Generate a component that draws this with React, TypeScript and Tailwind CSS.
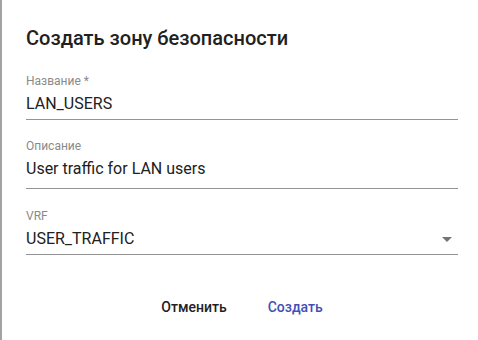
const fields = [
  { label: "Название *", value: "LAN_USERS", mt: "mt-[23px]", pb: "pb-[5px]" },
  { label: "Описание", value: "User traffic for LAN users", mt: "mt-[18px]", pb: "pb-[9px]" },
  { label: "VRF", value: "USER_TRAFFIC", mt: "mt-[19px]", pb: "pb-[5px]", select: true },
];

export default function App() {
  return (
    <div
      className="w-[478px] h-[340px] bg-white border-l-2 border-[#a3a3a3] pl-6 pr-5 pt-[26px] flex flex-col"
      style={{ fontFamily: "Roboto, 'Noto Sans', sans-serif" }}
    >
      <h2 className="text-[20px] leading-6 font-medium text-[#212121]">
        Создать зону безопасности
      </h2>

      {fields.map((f) => (
        <div key={f.label} className={`${f.mt} flex flex-col border-b border-[#949494]`}>
          <label className="text-[12px] leading-4 text-[#8a8a8a]">{f.label}</label>
          <div className={`mt-[5px] flex items-center justify-between ${f.pb}`}>
            <span className="text-[16px] leading-5 text-[#212121]">{f.value}</span>
            {f.select && (
              <svg width="24" height="24" viewBox="0 0 24 24" className="mr-[-1px] -my-1">
                <path d="M7 10l5 5 5-5z" fill="#757575" />
              </svg>
            )}
          </div>
        </div>
      ))}

      <div className="mt-[44px] flex justify-center gap-[41px]">
        <button className="text-[14px] leading-4 font-medium text-[#212121]">Отменить</button>
        <button className="text-[14px] leading-4 font-medium text-[#3f51b5]">Создать</button>
      </div>
    </div>
  );
}
